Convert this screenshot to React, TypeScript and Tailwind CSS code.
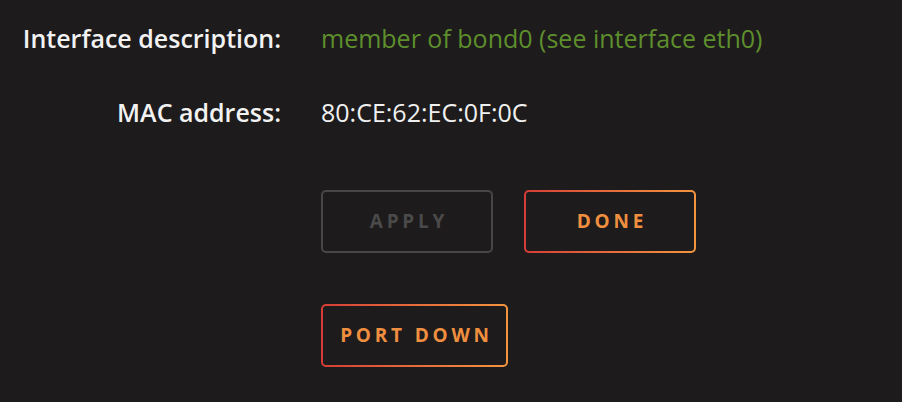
const GradientButton = ({ label, className = "" }: { label: string; className?: string }) => (
  <div className={`rounded-[5px] bg-gradient-to-r from-[#d63c37] to-[#f3953f] p-[2px] ${className}`}>
    <div className="flex h-full w-full items-center justify-center rounded-[3px] bg-[#1d1b1c] pl-[4px] text-[19px] font-bold tracking-[0.2em] text-[#ef8f3f]">
      {label}
    </div>
  </div>
);

export default function App() {
  return (
    <div
      className="h-[402px] w-[902px] bg-[#1d1b1c] text-white"
      style={{ fontFamily: '"Open Sans", "Noto Sans", sans-serif' }}
    >
      <div className="grid grid-cols-[281px_1fr] gap-x-10 pt-[21px]">
        <div className="h-[34px] text-right text-[25px] font-semibold leading-[34px] text-[#f2f2f2]">
          Interface description:
        </div>
        <div className="h-[34px] text-[25px] leading-[34px] text-[#5e8f2c]">
          member of bond0 (see interface eth0)
        </div>

        <div className="mt-[40px] h-[34px] text-right text-[25px] font-semibold leading-[34px] text-[#f2f2f2]">
          MAC address:
        </div>
        <div className="mt-[40px] h-[34px] text-[25px] leading-[34px] text-[#f0f0f0]">
          80:CE:62:EC:0F:0C
        </div>

        <div />
        <div className="mt-[61px] flex flex-col gap-[51px]">
          <div className="flex gap-[31px]">
            <div className="flex h-[63px] w-[172px] items-center justify-center rounded-[5px] border-2 border-[#474747] pl-[4px] text-[19px] font-bold tracking-[0.2em] text-[#4a4a4a]">
              APPLY
            </div>
            <GradientButton label="DONE" className="h-[63px] w-[172px]" />
          </div>
          <GradientButton label="PORT DOWN" className="h-[63px] w-[187px]" />
        </div>
      </div>
    </div>
  );
}
